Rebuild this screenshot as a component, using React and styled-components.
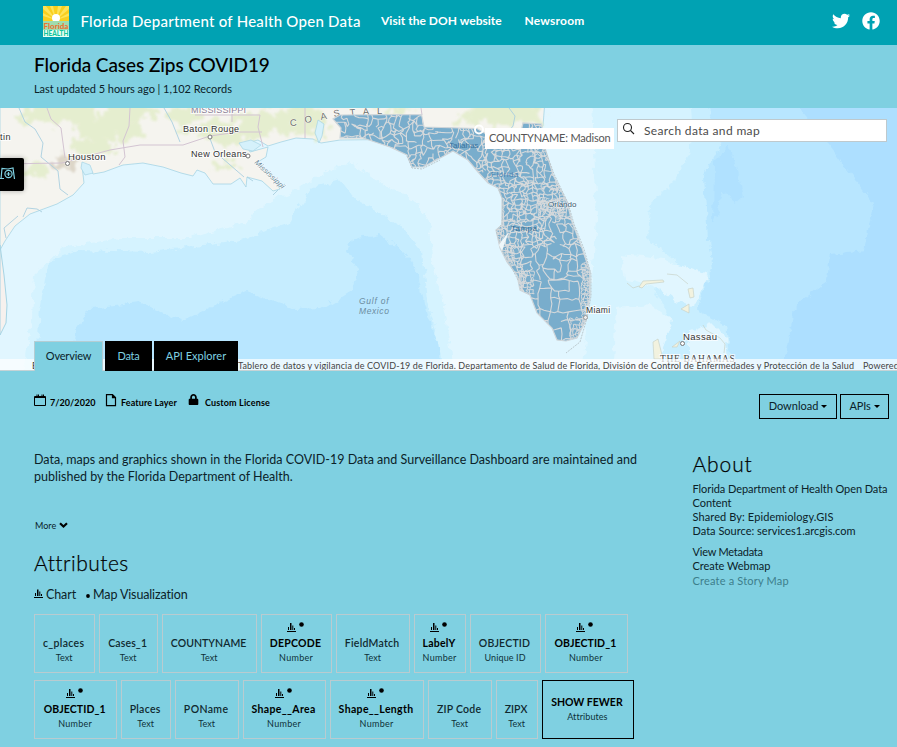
import React from 'react';
import styled, { createGlobalStyle, css } from 'styled-components';
import { FaTwitter, FaFacebook, FaLock } from 'react-icons/fa';

const Global = createGlobalStyle`
  * { box-sizing: border-box; }
  body { margin: 0; background: #7fd0e1; overflow: hidden; }
`;
const type = css`
  font-size: ${p => p.$size}px;
  letter-spacing: ${p => p.$ls || 0}px;
  white-space: nowrap;
`;
const Page = styled.div`
  width: 897px; height: 747px; overflow: hidden;
  background: #7fd0e1; color: #0b2229;
  font-family: Lato, "Open Sans", sans-serif;
`;

/* header */
const Header = styled.header`
  height: 45px; background: #00a2b3; color: #fff;
  display: flex; align-items: center; padding: 0 17px 3px 43px;
`;
const Logo = styled.svg`width: 26px; height: 31px; margin-right: 11.5px; flex: none;`;
const Brand = styled.span`${type} font-weight: 500; width: 300.500px; margin-top: -1px;`;
const NavLink = styled.a`${type} font-weight: 700; width: ${p => p.$w}px; margin-top: -1px;`;
const Social = styled.div`display: flex; gap: 12px; margin-left: auto; font-size: 18px;`;

/* title */
const TitleBar = styled.section`height: 63px; padding: 7px 34px 0;`;
const Title = styled.h1`${type} margin: 0; font-weight: 500; line-height: 25px; color: #000;`;
const Updated = styled.div`${type} line-height: 14px; margin-top: 5px;`;

/* map */
const MapArea = styled.section`position: relative; height: 263px; overflow: hidden; background: #e1f6ff;`;
const MapSvg = styled.svg`display: block; width: 897px; height: 263px;`;
const Tooltip = styled.div`
  ${type} position: absolute; left: 485px; top: 20px; width: 129px; height: 21px;
  background: #fff; color: #555; line-height: 19px; padding-left: 4px;
`;
const Search = styled.label`
  position: absolute; left: 617px; top: 11px; width: 270px; height: 23px;
  background: #fff; border: 1px solid #bfc9cd; display: flex; align-items: center; gap: 9px; padding-left: 4px;
  svg { flex: none; margin-top: -5px; }
`;
const SearchText = styled.span`${type} color: #4c4c4c;`;
const SideButton = styled.div`
  position: absolute; left: 0; top: 50px; width: 24px; height: 33px; background: #000;
  border-radius: 0 2px 2px 0; box-shadow: 0 0 5px rgba(0,0,0,.3);
  svg { display: block; margin-top: 8px; }
`;
const Credits = styled.div`
  ${type} position: absolute; left: 0; right: 0; bottom: 0; height: 12px; line-height: 13px;
  background: rgba(255,255,255,.7); border-bottom: 1px solid #c6d3d6; color: #444;
  display: flex; padding-left: 32px; overflow: hidden;
`;
const CreditSource = styled.span`width: ${p => p.$w}px; flex: none;`;
const Tabs = styled.nav`position: absolute; left: 34px; bottom: -1px; display: flex; gap: 2px;`;
const Tab = styled.a`
  ${type} width: ${p => p.$w}px; height: 31px; padding-bottom: 3px;
  display: flex; align-items: center; justify-content: center;
  background: ${p => (p.$active ? '#7fd0e1' : '#000')};
  color: ${p => (p.$active ? '#0b2229' : '#7fd0e1')};
  border: 1px solid ${p => (p.$active ? '#b5cdd3' : '#000')};
  border-bottom: 0;
`;

/* body */
const MetaRow = styled.section`
  height: 80px; padding: 23px 8px 0 34px; display: flex; justify-content: space-between; align-items: flex-start;
`;
const MetaList = styled.div`display: flex; color: #000;`;
const Meta = styled.div`
  width: ${p => p.$w}px; height: 17px; display: flex; gap: ${p => p.$gap}px;
  svg { flex: none; }
`;
const MetaText = styled.span`${type} font-weight: 700; line-height: 18px;`;
const Buttons = styled.div`display: flex; gap: 3px;`;
const Button = styled.button`
  ${type} font-family: inherit; width: ${p => p.$w}px; height: 25px; padding: 0 0 3px;
  background: transparent; border: 1px solid #000; color: #0b2229;
  display: flex; align-items: center; justify-content: center; gap: 3px;
`;
const Caret = styled.i`border: 3px solid transparent; border-top-color: #000; border-bottom: 0; margin-top: 2px;`;
const Columns = styled.main`display: grid; grid-template-columns: 692.5px 1fr;`;
const Left = styled.div`padding-left: 34px;`;
const Para = styled.p`margin: 0; height: 66px;`;
const Line = styled.span`${type} display: block; line-height: 17px;`;
const More = styled.a`${type} display: flex; align-items: center; gap: 3px; height: 16px; padding-left: 1px;`;
const Heading = styled.h2`${type} margin: ${p => p.$m}; font-weight: 300; line-height: 28px; color: #000; -webkit-text-stroke: .25px #000;`;
const Legend = styled.div`display: flex; align-items: center; height: 18px; margin-top: 8px;`;
const LegendText = styled.span`${type} margin: 0 ${p => p.$mr || 0}px 0 ${p => p.$ml}px;`;
const Row = styled.div`display: flex; gap: 3.7px; margin-top: ${p => p.$top}px; width: 640px;`;
const Card = styled.div`
  width: ${p => p.$w}px; height: 59px; flex: none; padding: ${p => (p.$toggle ? 0 : 7)}px 2px 0 0;
  border: 1px solid ${p => (p.$toggle ? '#000' : '#b9cbd0')};
  text-align: center; color: #000;
`;
const CardIcons = styled.div`height: 14px; display: flex; justify-content: center; svg { display: block; }`;
const CardName = styled.div`${type} font-weight: ${p => (p.$bold ? 700 : 600)}; line-height: 14px; color: ${p => (p.$bold ? '#000' : '#10292f')};`;
const CardType = styled.div`${type} line-height: 15px; color: #0e3038; padding-left: 1px;`;
const Info = styled.div`${type} line-height: 14px; color: ${p => (p.$muted ? '#3d7e8b' : '#0b2229')}; margin-top: ${p => p.$mt || 0}px;`;

const Bars = () => (
  <svg width="9" height="10" viewBox="0 0 9 10" fill="#000">
    <path d="M0 8h9v1H0zM1 4h1v3H1zM3 0.500h1.500v6.500H3zM5.300 2.500h1v4.500h-1zM7 5h1v2H7z" />
  </svg>
);
const BarsDot = () => (
  <svg width="18" height="13" viewBox="0 0 18 13" fill="#000">
    <path d="M0 9h9v1H0zM1 5h1v3H1zM3 1h1.500v7H3zM5.300 3.500h1v4.500h-1zM7 6h1v2H7z" />
    <circle cx="14.500" cy="2.500" r="2.300" />
  </svg>
);

/* map geometry */
const FL = 'M340 115L421.500 114.500L424 127L477 128.500L486 134L520 136L523 123L541.500 124L545 148L553 175L567 202L572 222L582 248L590 272L590 295L585 322L577 338L566 341L557 340L552 328L537 313L530 295L520 290L517 275L507 262L500 248L496 230L502 225L502 198L498 188L488 183L478 172L468 160L453 151L442 157L423 167L412 167L407 155L390 147L363 138L340 138L341 128L333 119Z';
let seed = 7;
const rnd = () => { seed = (seed * 16807) % 2147483647; return seed / 2147483647; };
const mesh = (x0, y0, x1, y1, s, jit, keep) => {
  const nx = Math.round((x1 - x0) / s), ny = Math.round((y1 - y0) / s);
  const pts = [];
  for (let j = 0; j <= ny; j++) {
    pts.push([]);
    for (let i = 0; i <= nx; i++) pts[j].push([x0 + i * s + (rnd() - 0.5) * s * jit, y0 + j * s + (rnd() - 0.5) * s * jit]);
  }
  let d = '';
  const edge = (a, b) => {
    const mx = (a[0] + b[0]) / 2 + (rnd() - 0.5) * s * jit * 0.6, my = (a[1] + b[1]) / 2 + (rnd() - 0.5) * s * jit * 0.6;
    d += `M${a[0].toFixed(1)} ${a[1].toFixed(1)}L${mx.toFixed(1)} ${my.toFixed(1)}L${b[0].toFixed(1)} ${b[1].toFixed(1)}`;
  };
  for (let j = 0; j <= ny; j++) for (let i = 0; i <= nx; i++) {
    if (i < nx && rnd() < keep) edge(pts[j][i], pts[j][i + 1]);
    if (j < ny && rnd() < keep) edge(pts[j][i], pts[j + 1][i]);
  }
  return d;
};
const MESH = mesh(330, 112, 484, 170, 6, 1.1, 0.72) + mesh(484, 118, 560, 184, 4.8, 1.1, 0.8)
  + mesh(484, 184, 575, 220, 4, 1.1, 0.85) + mesh(492, 220, 545, 247, 4.4, 1.1, 0.85)
  + mesh(545, 218, 582, 247, 6.5, 1, 0.75) + mesh(498, 247, 522, 300, 5, 1, 0.85)
  + mesh(522, 246, 590, 280, 8, 0.8, 0.76) + mesh(520, 280, 585, 345, 10, 0.45, 0.74);
const DENSE = mesh(582, 262, 594, 335, 2.6, 0.9, 0.95) + mesh(570, 318, 590, 342, 3.2, 0.8, 0.8)
  + mesh(495, 224, 504, 248, 2.6, 0.9, 0.9) + mesh(538, 198, 562, 214, 2.8, 0.9, 0.9)
  + mesh(518, 272, 532, 292, 3, 0.9, 0.8) + mesh(502, 248, 512, 266, 2.8, 0.9, 0.8) + mesh(532, 140, 546, 156, 3, 0.9, 0.8);
const GREENS = [[60, 112, 34, 13], [110, 128, 34, 14], [92, 148, 22, 8], [34, 170, 12, 7], [185, 118, 16, 12], [228, 132, 28, 12], [262, 124, 24, 12], [302, 120, 26, 14], [225, 165, 16, 5], [320, 130, 10, 10], [395, 110, 18, 3], [500, 112, 30, 14], [530, 115, 12, 14], [468, 119, 12, 5], [130, 112, 28, 8], [30, 120, 14, 6]];

const Place = styled.text`
  font-family: "Liberation Sans", Arial, sans-serif; font-size: ${p => p.$size || 9.5}px;
  letter-spacing: ${p => p.$ls ?? 0.5}px; fill: ${p => p.$c || '#333'};
  font-style: ${p => (p.$italic ? 'italic' : 'normal')};
  paint-order: stroke; stroke: rgba(255,255,255,.75); stroke-width: ${p => p.$halo ?? 2}px;
`;
const Serif = styled(Place)`font-family: "Liberation Serif", serif;`;

const FloridaMap = () => (
  <MapSvg viewBox="0 108 897 263">
    <defs>
      <clipPath id="fl"><path d={FL} /></clipPath>
      <filter id="rough" x="-5%" y="-5%" width="110%" height="110%">
        <feTurbulence type="fractalNoise" baseFrequency=".12" numOctaves="3" seed="4" />
        <feDisplacementMap in="SourceGraphic" scale="9" xChannelSelector="R" yChannelSelector="G" />
      </filter>
      <filter id="soft" x="-40%" y="-60%" width="180%" height="220%">
        <feTurbulence type="fractalNoise" baseFrequency=".1" numOctaves="4" seed="8" />
        <feDisplacementMap in="SourceGraphic" scale="26" xChannelSelector="R" yChannelSelector="G" />
        <feGaussianBlur stdDeviation="1.200" />
      </filter>
    </defs>
    <rect y="108" width="897" height="263" fill="#e1f6ff" />
    <g filter="url(#rough)">
      <path d="M22 380L32 320L34 275L62 248L120 238L190 238L245 222L270 200L300 188L330 170L350 162L380 182L415 200L430 222L432 260L442 300L456 380Z" fill="#d5f3ff" />
      <path d="M34 380L40 310L48 262L80 250L150 252L240 240L290 222L312 188L340 180L356 200L400 225L422 252L428 300L446 380Z" fill="#c6edff" />
      <path d="M68 380L76 332L90 309L140 303L182 321L232 297L246 291L292 309L322 308L352 290L358 268L345 246L356 238L380 234L402 250L418 272L424 302L438 345L442 380Z" fill="#b8e6ff" />
      <path d="M592 100L597 220L590 300L580 380L910 380L910 100Z" fill="#d5f3ff" />
      <path d="M690 100L694 140L675 180L650 205L648 240L680 262L655 290L670 320L650 345L660 380L910 380L910 100Z" fill="#c8eeff" />
      <path d="M705 100L722 142L704 175L708 240L712 270L697 310L726 326L734 380L910 380L910 100Z" fill="#b8e6ff" />
      <path d="M793 100L828 143L847 168L874 203L864 250L830 254L827 281L794 307L790 334L780 380L910 380L910 100Z" fill="#addfff" />
      <path d="M714 162L730 146L744 196L736 203L722 192L717 215L713 225Z" fill="#b0e1ff" />
      <path d="M620 255L663 259L708 275L706 284L693 306L675 302L655 287L625 278Z M616 308L650 305L673 320L665 342L655 380L612 380Z M690 330L710 322L726 338L728 362L690 362Z" fill="#e1f6ff" />
    </g>
    <path d="M0 100H545L543 126L520 138L340 140L321 143L313 139L296 138L281 142L268 146L258 140L245 143L250 152L268 147L266 157L256 163L270 173L280 189L273 191L262 181L247 177L246 187L240 178L231 184L213 184L205 173L197 170L193 176L181 173L163 167L143 163L123 165L104 172L93 174L88 167L82 166L84 183L73 195L57 204L30 214L15 226L5 241L0 250Z" fill="#f5f4ef" stroke="#a6d4e4" strokeWidth=".8" />
    <path d="M0 245L4 275L7 305L6 323L0 335Z" fill="#f6f1ee" stroke="#a6d4e4" />
    <g fill="#e3edca" filter="url(#soft)" opacity=".85">
      {GREENS.map((g, i) => <ellipse key={i} cx={g[0]} cy={g[1]} rx={g[2]} ry={g[3]} />)}
    </g>
    <ellipse cx="67" cy="163" rx="12" ry="7" fill="#ddd6c8" filter="url(#soft)" />
    <path d="M82 162l8 3 3 8-8 2-4-7zM239 143l12-3 10 5-8 6-10-2zM318 120l6 4 -2 12-3 7-4-10z" fill="#d5f1fb" stroke="#a6d4e4" strokeWidth=".7" />
    <g fill="none" stroke="#a9cfe0" strokeWidth=".9">
      <path d="M19 108l6 14 10 7 8 14-2 14 17 14 2 18 8 6M209 136l6 16 14 12 15 13M257 163l14 12 10 11M164 108l8 14 8 20M23 217l4-9 10 1 5 3M6 238l-2-10 14-12" />
      <path d="M278 190l-5 5M281 187l4-3M247 177l6 4M509 108l6 8 -2 10 -5 6" />
    </g>
    <g fill="none" stroke="#d3c4d2" strokeWidth="1">
      <path d="M130 108l-1 18-6 15 2 16-6 8M195 115h65l-2 12 5 20M47 108l4 11 10 9 4 30M0 164l62-1 48-13 30-5 43 0 27-9 28-4 24 0M232 108v14M421 108l1 7M305 108v30" />
    </g>
    <Place x="191" y="113" $size={9} $c="#8c8196" $ls={.15}>MISSISSIPPI</Place>
    <Place x="-5" y="140" $size={9}>stin</Place>
    <Place x="68" y="160" $size={9.5} $ls={.35}>Houston</Place>
    <Place x="183" y="132" $size={9} $ls={.35}>Baton Rouge</Place>
    <Place x="191" y="157" $size={9} $ls={.35}>New Orleans</Place>
    <g fill="#fff" stroke="#777"><circle cx="67.500" cy="163.500" r="2" /><circle cx="210" cy="137" r="2" /><circle cx="248" cy="156" r="2" /></g>
    <Place transform="translate(254 163) rotate(43)" $size={7.5} $c="#6a8795" $italic $halo={1} $ls={.2}>Mississippi</Place>
    {[['C', 290, 126, -2], ['O', 305, 123, -8], ['A', 321, 120, -10], ['S', 334, 117, -10], ['T', 350, 116, -6], ['A', 363, 115, -4], ['L', 377, 114, 0]].map((c, i) => (
      <Place key={i} transform={`translate(${c[1]} ${c[2]}) rotate(${c[3]})`} $size={9.5} $c="#6f716e" $halo={1}>{c[0]}</Place>
    ))}
    <path d={FL} fill="#79adcc" stroke="#cfd5d9" strokeWidth="1.200" />
    <g clipPath="url(#fl)" fill="none" stroke="#d6d9db">
      <path d={MESH} strokeWidth="1.100" />
      <path d={DENSE} strokeWidth="1" />
    </g>
    <g fill="none" stroke="#bbc8cd" strokeWidth="1">
      <path d="M545 149L554 174 568 203 574 224 584 249 591 274 591 296 587 318 580 342 566 353M407 156l5 12 10 1 18-9M499 190l4 10-1 24-6 7 6 18 16 31" strokeDasharray="2 1" />
    </g>
    <path d="M499 245l4-6 6-7-4 10-3 9z" fill="#eef7fa" />
    <Place x="449" y="148" $size={8} $c="#39729d" $halo={0} $ls={0}>Tallahas</Place>
    <Place x="491" y="177" $size={8} $c="#4b83b0" $halo={0}>Florida</Place>
    <Place x="511" y="231" $size={8} $c="#366d94" $halo={0}>Tampa</Place>
    <Place x="548" y="207" $size={8} $halo={1} $c="#34556d" $ls={0}>Orlando</Place>
    <circle cx="479" cy="129.500" r="4" fill="none" stroke="#fff" strokeWidth="2" />
    <Place x="586" y="313" $size={8.5} $ls={.35}>Miami</Place>
    <circle cx="585.500" cy="317.500" r="2" fill="#eee" stroke="#999" />
    <Place x="359" y="304" $size={8.5} $c="#6b8c9f" $italic $ls={.75} $halo={0}>Gulf of</Place>
    <Place x="359" y="313.500" $size={8.5} $c="#6b8c9f" $italic $ls={.6} $halo={0}>Mexico</Place>
    <g fill="#f2f2df" stroke="#c9d3c9" strokeWidth=".7">
      <path d="M639 287l4-6 20-1 1 2-18 2-4 4zM688 289l5-1 1 9-4 1zM681 309l8-5v9zM653 342l5-3 5 20h-9zM672 347l8-6-3 6z" />
      <path d="M627 283l6 5 6-2M667 274l10 1 11 9M703 325l3 5 14 8 5 6-1 9" fill="none" />
    </g>
    <Place x="683" y="339.500" $size={9.5} $ls={.35}>Nassau</Place>
    <circle cx="682.500" cy="343.500" r="2" fill="#fff" stroke="#777" />
    <Serif x="660" y="361.500" $size={9.5} $ls={.65} $c="#444">THE BAHAMAS</Serif>
  </MapSvg>
);

const CREDIT = 'Tablero de datos y vigilancia de COVID-19 de Florida. Departamento de Salud de Florida, División de Control de Enfermedades y Protección de la Salud';
const ROW1 = [
  { n: 'c_places', t: 'Text', w: 61.3, ls: .34 }, { n: 'Cases_1', t: 'Text', w: 59.3, ls: .15 },
  { n: 'COUNTYNAME', t: 'Text', w: 95.3, ls: .03 }, { n: 'DEPCODE', t: 'Number', w: 71.3, ls: .24, bold: true },
  { n: 'FieldMatch', t: 'Text', w: 74.3, ls: .24 }, { n: 'LabelY', t: 'Number', w: 52.3, ls: .21, bold: true },
  { n: 'OBJECTID', t: 'Unique ID', w: 71.3, ls: .21 }, { n: 'OBJECTID_1', t: 'Number', w: 83, ls: .09, bold: true },
];
const ROW2 = [
  { n: 'OBJECTID_1', t: 'Number', w: 83.3, ls: .09, bold: true }, { n: 'Places', t: 'Text', w: 50.3, ls: .28 },
  { n: 'POName', t: 'Text', w: 64.3, ls: .36 }, { n: 'Shape__Area', t: 'Number', w: 83.3, ls: .34, bold: true },
  { n: 'Shape__Length', t: 'Number', w: 94.3, ls: .35, bold: true }, { n: 'ZIP Code', t: 'Text', w: 64.3, ls: .22 },
  { n: 'ZIPX', t: 'Text', w: 42.3, ls: 0 }, { n: 'SHOW FEWER', t: 'Attributes', w: 92, ls: 0, bold: true, toggle: true },
];
const TYPE_LS = { Text: 0, Number: .29, 'Unique ID': .1, Attributes: .07 };
const Cards = ({ items, top }) => (
  <Row $top={top}>
    {items.map((c, i) => (
      <Card key={i} $w={c.w} $toggle={c.toggle}>
        <CardIcons>{c.bold && !c.toggle && <BarsDot />}</CardIcons>
        <CardName $size={10.5} $ls={c.ls} $bold={c.bold}>{c.n}</CardName>
        <CardType $size={9} $ls={TYPE_LS[c.t]}>{c.t}</CardType>
      </Card>
    ))}
  </Row>
);

export default function App() {
  return (
    <Page>
      <Global />
      <Header>
        <Logo viewBox="0 0 26 31">
          <rect width="26" height="17" fill="#f9cf1f" />
          <path d="M13 14L0 3V0h3zM13 14L7 0h3zM13 14L15 0h4zM13 14L23 0h3v3zM13 14L26 7v3zM13 14L0 7v3z" fill="#fde35a" />
          <circle cx="13" cy="12" r="4" fill="#fff" />
          <rect y="15" width="26" height="9" fill="#9fdcae" />
          <rect y="24" width="26" height="7" fill="#e8fff3" />
          <text x=".5" y="23" fontFamily="Lato" fontWeight="900" fontSize="8" fill="#ee7230" textLength="25" lengthAdjust="spacingAndGlyphs">Florida</text>
          <text x=".5" y="30.300" fontFamily="Lato" fontWeight="900" fontSize="7.500" fill="#12c49d" textLength="25" lengthAdjust="spacingAndGlyphs">HEALTH</text>
        </Logo>
        <Brand $size={15} $ls={.26}>Florida Department of Health Open Data</Brand>
        <NavLink $size={12} $ls={.02} $w={143.5}>Visit the DOH website</NavLink>
        <NavLink $size={12} $ls={.21} $w={70}>Newsroom</NavLink>
        <Social><FaTwitter /><FaFacebook /></Social>
      </Header>
      <TitleBar>
        <Title $size={19} $ls={-.08}>Florida Cases Zips COVID19</Title>
        <Updated $size={11} $ls={-.04}>Last updated 5 hours ago | 1,102 Records</Updated>
      </TitleBar>
      <MapArea>
        <FloridaMap />
        <SideButton>
          <svg width="16" height="16" viewBox="0 0 16 16" fill="none" stroke="#7fd0e1" strokeWidth="1.200">
            <path d="M1 13L2 2.500l6 .500 5-1 1.500 11M0 12.500h4" /><circle cx="8.500" cy="8" r="3.600" fill="#000" /><path d="M8.500 6v4M6.500 8h4" />
          </svg>
        </SideButton>
        <Tooltip $size={11} $ls={-.2}>COUNTYNAME: Madison</Tooltip>
        <Search>
          <svg width="13" height="13" viewBox="0 0 13 13" fill="none" stroke="#222" strokeWidth="1.100"><circle cx="5.500" cy="5.500" r="4" /><path d="M8.500 8.500l3.500 3.500" /></svg>
          <SearchText $size={12} $ls={.35}>Search data and map</SearchText>
        </Search>
        <Credits $size={9} $ls={.15}>
          <CreditSource $w={206}>E</CreditSource>
          <CreditSource $w={625}>{CREDIT}</CreditSource>
          <CreditSource $w={60}>Powered by Esri</CreditSource>
        </Credits>
        <Tabs>
          <Tab $active $w={69} $size={11} $ls={-.17}>Overview</Tab>
          <Tab $w={47} $size={11} $ls={-.26}>Data</Tab>
          <Tab $w={84} $size={11}>API Explorer</Tab>
        </Tabs>
      </MapArea>
      <MetaRow>
        <MetaList>
          <Meta $w={71} $gap={4}>
            <svg width="12" height="13" viewBox="0 0 12 13" fill="none" stroke="#000"><path d="M.5 2.500h11v9H.5z" /><path d="M.5 3.500h11M3 .500v3M4.500 .500v3M8 .500v3M9.500 .500v3" /></svg>
            <MetaText $size={9} $ls={.06}>7/20/2020</MetaText>
          </Meta>
          <Meta $w={83} $gap={4}>
            <svg width="12" height="13" viewBox="0 0 12 13" fill="none" stroke="#000" strokeWidth="1.200"><path d="M1.500 .600h6l3 3v8h-9zM7.500 .600v3h3" /></svg>
            <MetaText $size={9} $ls={.11}>Feature Layer</MetaText>
          </Meta>
          <Meta $w={90} $gap={6}>
            <FaLock size={11} />
            <MetaText $size={9} $ls={.14}>Custom License</MetaText>
          </Meta>
        </MetaList>
        <Buttons>
          <Button $w={78} $size={11}>Download<Caret /></Button>
          <Button $w={49} $size={11} $ls={-.18}>APIs<Caret /></Button>
        </Buttons>
      </MetaRow>
      <Columns>
        <Left>
          <Para>
            <Line $size={12.5} $ls={.013}>Data, maps and graphics shown in the Florida COVID-19 Data and Surveillance Dashboard are maintained and</Line>
            <Line $size={12.5} $ls={.013}>published by the Florida Department of Health.</Line>
          </Para>
          <More $size={9}>More
            <svg width="9" height="7" viewBox="0 0 9 7" fill="none" stroke="#000" strokeWidth="2.200"><path d="M1 1.200l3.500 3.300L8 1.200" /></svg>
          </More>
          <Heading $m="16px 0 0" $size={21} $ls={.5}>Attributes</Heading>
          <Legend>
            <Bars /><LegendText $size={12.5} $ls={-.11} $ml={3} $mr={10}>Chart</LegendText>
            <svg width="4" height="9" viewBox="0 0 4 9"><circle cx="2" cy="6" r="1.900" /></svg>
            <LegendText $size={12.5} $ls={-.13} $ml={3}>Map Visualization</LegendText>
          </Legend>
          <Cards items={ROW1} top={11} />
          <Cards items={ROW2} top={7} />
        </Left>
        <aside>
          <Heading $m="-1px 0 4px" $size={21} $ls={.9}>About</Heading>
          <Info $size={11} $ls={-.07}>Florida Department of Health Open Data</Info>
          <Info $size={11} $ls={-.04}>Content</Info>
          <Info $size={11} $ls={.1}>Shared By: Epidemiology.GIS</Info>
          <Info $size={11} $ls={.01}>Data Source: services1.arcgis.com</Info>
          <Info $size={11} $ls={-.23} $mt={7}>View Metadata</Info>
          <Info $size={11} $ls={-.02}>Create Webmap</Info>
          <Info $size={11} $ls={.19} $mt={1} $muted>Create a Story Map</Info>
        </aside>
      </Columns>
    </Page>
  );
}
